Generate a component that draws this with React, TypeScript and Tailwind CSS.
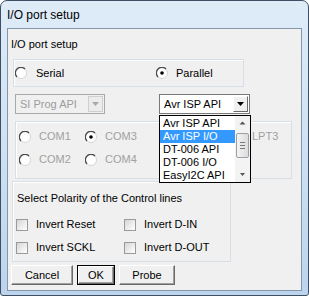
function Radio({ checked = false }: { checked?: boolean }) {
  return (
    <svg width="12" height="12" viewBox="0 0 12 12" className="shrink-0">
      <circle cx="6" cy="6" r="5.5" fill="#ffffff" stroke="#d4d4d4" />
      <path d="M10 2 A5.5 5.5 0 0 0 2 10" fill="none" stroke="#4a4a4a" strokeWidth="1.3" />
      {checked && <circle cx="6" cy="6" r="1.8" fill="#000000" />}
    </svg>
  );
}

function Check({ label }: { label: string }) {
  return (
    <div className="flex items-center">
      <div className="h-[12px] w-[12px] border border-[#9a9a9a] bg-gradient-to-br from-[#d6d6d6] to-white" />
      <span className="ml-[8px]">{label}</span>
    </div>
  );
}

function Btn({ label, def = false, w }: { label: string; def?: boolean; w: string }) {
  return (
    <div className={`${w} h-[20px] ${def ? "border border-black" : ""}`}>
      <div className="flex h-full w-full items-center justify-center border border-b-[#6a6a6a] border-l-white border-r-[#6a6a6a] border-t-white bg-[#f0f0f0] shadow-[inset_-1px_-1px_0_#a0a0a0]">
        {label}
      </div>
    </div>
  );
}

function Arrow({ color = "#000", small = false }: { color?: string; small?: boolean }) {
  return (
    <svg width="7" height="4" viewBox="0 0 7 4">
      {small ? <path d="M1 0 H6 L3.5 3 Z" fill={color} /> : <path d="M0 0 H7 L3.5 4 Z" fill={color} />}
    </svg>
  );
}

const items = ["Avr ISP API", "Avr ISP I/O", "DT-006 API", "DT-006 I/O", "EasyI2C API"];

export default function App() {
  return (
    <div className="h-[298px] w-[309px] bg-white font-['Liberation_Sans',Arial,sans-serif] text-[11px] leading-[13px] text-black">
      <div className="flex h-[296px] w-[309px] flex-col rounded-t-[7px] rounded-b-[3px] border border-[#3f4f63] bg-gradient-to-b from-[#dfecf8] via-[#cfe1f3] to-[#bcd4ec]">
        <div className="flex h-[27px] items-center pl-[6px] pt-[2px] text-[12px]">I/O port setup</div>
        <div className="mx-[6px] mb-[4px] flex-1 border border-[#8496aa] bg-[#f0f0f0]">
          <div className="ml-[3px] mt-[9px]">I/O port setup</div>

          <div className="ml-[5px] mt-[8px] flex h-[28px] w-[231px] items-center border border-[#d5dfe5] pl-[1px] shadow-[inset_1px_1px_0_white]">
            <div className="flex w-[141px] items-center">
              <Radio />
              <span className="ml-[9px]">Serial</span>
            </div>
            <Radio checked />
            <span className="ml-[8px]">Parallel</span>
          </div>

          <div className="mt-[7px] flex">
            <div className="ml-[7px] flex h-[20px] w-[90px] items-center justify-between border border-[#a9a9a9] bg-[#f0f0f0] pl-[4px] pr-[1px] text-[#9c9c9c]">
              <span>SI Prog API</span>
              <div className="flex h-[16px] w-[15px] items-center justify-center border border-[#cfcfcf] bg-[#ececec]">
                <Arrow color="#a8a8a8" />
              </div>
            </div>
            <div className="relative ml-[54px]">
              <div className="flex h-[20px] w-[91px] items-center justify-between border border-[#7a7a7a] bg-white pl-[4px] pr-[1px]">
                <span>Avr ISP API</span>
                <div className="flex h-[16px] w-[15px] items-center justify-center border border-b-[#6a6a6a] border-l-white border-r-[#6a6a6a] border-t-white bg-[#f0f0f0]">
                  <Arrow />
                </div>
              </div>
              <div className="absolute left-0 top-[21px] z-10 flex h-[68px] w-[92px] border border-black bg-white">
                <div className="flex-1 pt-[1px]">
                  {items.map((it, i) => (
                    <div
                      key={it}
                      className={`h-[13px] pl-[3px] ${i === 1 ? "bg-[#3399ff] text-white" : ""}`}
                    >
                      {it}
                    </div>
                  ))}
                </div>
                <div className="flex w-[15px] flex-col items-center bg-[#f3f3f3]">
                  <div className="flex h-[14px] items-center">
                    <svg width="7" height="4" viewBox="0 0 7 4">
                      <path d="M0.5 3.5 L3.5 0.5 L6.5 3.5 Z" fill="#555" />
                    </svg>
                  </div>
                  <div className="mt-[3px] flex h-[25px] w-[13px] flex-col items-center justify-center gap-[2px] rounded-[2px] border border-[#9aa0a8] bg-gradient-to-r from-[#f4f4f4] to-[#dcdcdc]">
                    <div className="h-px w-[5px] bg-[#777]" />
                    <div className="h-px w-[5px] bg-[#777]" />
                    <div className="h-px w-[5px] bg-[#777]" />
                  </div>
                  <div className="mt-auto flex h-[14px] items-center">
                    <Arrow color="#555" small />
                  </div>
                </div>
              </div>
            </div>
          </div>

          <div className="ml-[7px] mt-[7px] flex h-[58px] w-[277px] flex-col border border-[#d5dfe5] pl-[3px] text-[#a0a0a0] shadow-[inset_1px_1px_0_white]">
            <div className="mt-[8px] flex items-center">
              <div className="flex w-[66px] items-center">
                <Radio />
                <span className="ml-[8px]">COM1</span>
              </div>
              <div className="flex w-[148px] items-center">
                <Radio checked />
                <span className="ml-[8px]">COM3</span>
              </div>
              <Radio />
              <span className="ml-[7px]">LPT3</span>
            </div>
            <div className="mt-[10px] flex items-center">
              <div className="flex w-[66px] items-center">
                <Radio />
                <span className="ml-[8px]">COM2</span>
              </div>
              <div className="flex items-center">
                <Radio />
                <span className="ml-[8px]">COM4</span>
              </div>
            </div>
          </div>

          <div className="ml-[4px] mt-[2px] h-[81px] w-[219px] border border-[#d5dfe5] pl-[3px] shadow-[inset_1px_1px_0_white]">
            <div className="ml-[1px] mt-[10px]">Select Polarity of the Control lines</div>
            <div className="mt-[13px] flex">
              <div className="w-[108px]">
                <Check label="Invert Reset" />
              </div>
              <Check label="Invert D-IN" />
            </div>
            <div className="mt-[10px] flex">
              <div className="w-[108px]">
                <Check label="Invert SCKL" />
              </div>
              <Check label="Invert D-OUT" />
            </div>
          </div>

          <div className="ml-[3px] mt-[3px] flex gap-[4px]">
            <Btn label="Cancel" w="w-[62px]" />
            <Btn label="OK" def w="w-[38px]" />
            <Btn label="Probe" w="w-[56px]" />
          </div>
        </div>
      </div>
    </div>
  );
}
